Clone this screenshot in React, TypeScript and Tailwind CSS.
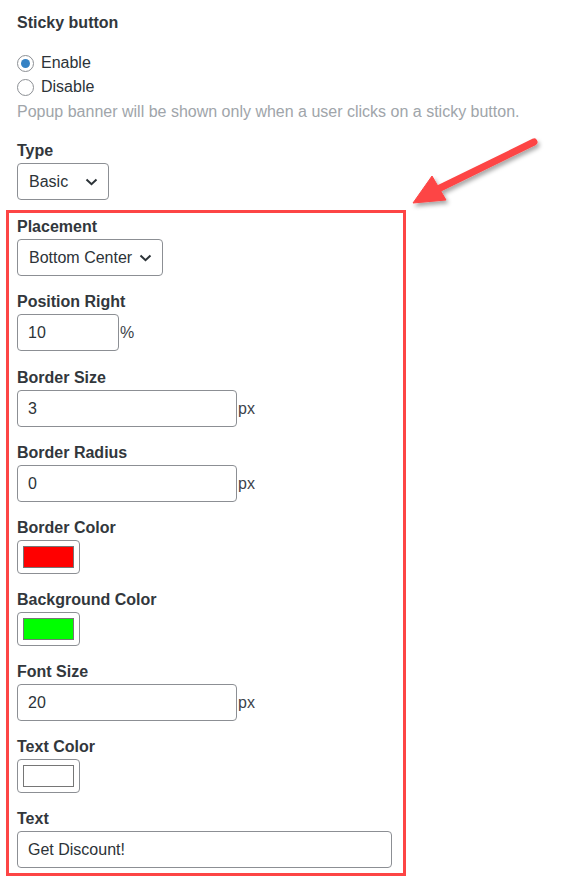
import React from "react";

const font = { fontFamily: '"Liberation Sans", Arial, sans-serif' };

const Chevron = () => (
  <svg width="13" height="8" viewBox="0 0 13 8" className="shrink-0">
    <path d="M1.5 1.5 L6.5 6.2 L11.5 1.5" fill="none" stroke="#2c3338" strokeWidth="2" />
  </svg>
);

const Label = ({ children }: { children: React.ReactNode }) => (
  <div className="text-[16px] leading-[22px] font-bold text-[#32373c]">{children}</div>
);

const Select = ({ value, w }: { value: string; w: string }) => (
  <div
    className={`mt-[1px] h-[37px] ${w} flex items-center justify-between pl-[11px] pr-[10px] border border-[#8c8f94] rounded-[4px] bg-white text-[16px] text-[#2c3338]`}
  >
    <span>{value}</span>
    <Chevron />
  </div>
);

const NumberInput = ({ value, w, unit }: { value: string; w: string; unit?: string }) => (
  <div className="mt-[1px] flex items-center gap-[1px]">
    <div
      className={`h-[37px] ${w} flex items-center pl-[10px] border border-[#8c8f94] rounded-[4px] bg-white text-[16px] text-[#2c3338]`}
    >
      {value}
    </div>
    {unit && <span className="text-[16px] text-[#3c434a] leading-none">{unit}</span>}
  </div>
);

const Swatch = ({ color }: { color: string }) => (
  <div className="mt-[1px] w-[63px] h-[34px] p-[5px] border border-[#8c8f94] rounded-[4px] bg-white">
    <div className={`w-full h-full border border-[#767676] ${color}`} />
  </div>
);

const Radio = ({ checked, label }: { checked?: boolean; label: string }) => (
  <label className="flex items-center h-[24px] gap-[7px] text-[16px] text-[#2c3338]">
    <span className="w-[17px] h-[17px] rounded-full border border-[#8c8f94] bg-white flex items-center justify-center">
      {checked && <span className="w-[9px] h-[9px] rounded-full bg-[#3582c4]" />}
    </span>
    {label}
  </label>
);

export default function App() {
  const fields = [
    { label: "Position Right", el: <NumberInput value="10" w="w-[102px]" unit="%" />, mb: "mb-[16px]" },
    { label: "Border Size", el: <NumberInput value="3" w="w-[220px]" unit="px" />, mb: "mb-[15px]" },
    { label: "Border Radius", el: <NumberInput value="0" w="w-[220px]" unit="px" />, mb: "mb-[15px]" },
    { label: "Border Color", el: <Swatch color="bg-[#ff0000]" />, mb: "mb-[15px]" },
    { label: "Background Color", el: <Swatch color="bg-[#00ff00]" />, mb: "mb-[15px]" },
    { label: "Font Size", el: <NumberInput value="20" w="w-[220px]" unit="px" />, mb: "mb-[15px]" },
    { label: "Text Color", el: <Swatch color="bg-white" />, mb: "mb-[15px]" },
  ];

  return (
    <div className="relative w-[570px] h-[880px] bg-white pl-[6px] pt-[12px]" style={font}>
      {/* top settings */}
      <div className="pl-[11px]">
        <div className="text-[16px] leading-[22px] font-bold text-[#32373c]">Sticky button</div>
        <div className="mt-[17px]">
          <Radio checked label="Enable" />
          <Radio label="Disable" />
        </div>
        <p className="text-[16px] leading-[25px] text-[#a0a5aa]">
          Popup banner will be shown only when a user clicks on a sticky button.
        </p>
        <div className="mt-[16px]">
          <Label>Type</Label>
          <Select value="Basic" w="w-[92px]" />
        </div>
      </div>

      {/* highlighted group */}
      <div className="mt-[10px] w-[400px] border-[3px] border-[#fd4545] pl-[8px] pt-[3px] pb-[5px]">
        <div className="mb-[15px]">
          <Label>Placement</Label>
          <Select value="Bottom Center" w="w-[146px]" />
        </div>
        {fields.map((f) => (
          <div key={f.label} className={f.mb}>
            <Label>{f.label}</Label>
            {f.el}
          </div>
        ))}
        <div>
          <Label>Text</Label>
          <NumberInput value="Get Discount!" w="w-[375px]" />
        </div>
      </div>

      {/* annotation arrow */}
      <svg className="absolute left-0 top-0 pointer-events-none" width="570" height="880">
        <defs>
          <filter id="sh" x="-20%" y="-20%" width="140%" height="140%">
            <feDropShadow dx="2" dy="3" stdDeviation="2" floodColor="#000" floodOpacity="0.35" />
          </filter>
        </defs>
        <g filter="url(#sh)" fill="#fd4545" stroke="#fd4545">
          <line x1="534" y1="142" x2="438" y2="189" strokeWidth="7" strokeLinecap="round" />
          <path d="M413 203 L432 176 L446 200 Z" strokeWidth="1" strokeLinejoin="round" />
        </g>
      </svg>
    </div>
  );
}
